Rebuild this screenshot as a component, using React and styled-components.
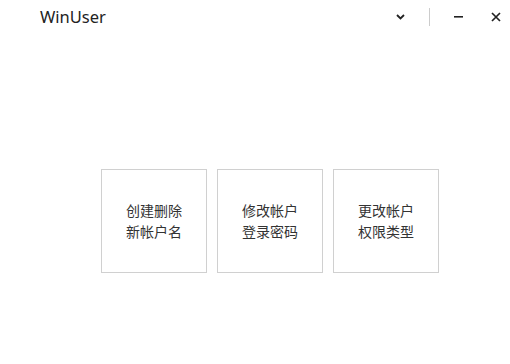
import styled, { createGlobalStyle } from "styled-components";

const GlobalStyle = createGlobalStyle`
  html, body {
    margin: 0;
    padding: 0;
    background: #fff;
    font-family: "Noto Sans", "Noto Sans CJK SC", sans-serif;
  }
`;

const Window = styled.div`
  width: 510px;
  height: 364px;
  display: flex;
  flex-direction: column;
  background: #fff;
`;

const TitleBar = styled.div`
  height: 34px;
  display: flex;
  align-items: center;
  padding: 0 4px 0 40px;
`;

const Title = styled.div`
  flex: 1;
  font-size: 16.5px;
  color: #222;
  margin-top: -1px;
`;

const Controls = styled.div`
  display: flex;
  align-items: center;
  height: 100%;
  gap: 18px;
`;

const CtrlButton = styled.div`
  width: 20px;
  height: 100%;
  display: flex;
  align-items: center;
  justify-content: center;
`;

const Divider = styled.div`
  width: 1px;
  height: 18px;
  background: #ccc;
  margin-left: 1px;
`;

const Content = styled.div`
  display: flex;
  gap: 10px;
  padding: 135px 0 0 101px;
`;

const Tile = styled.div`
  width: 104px;
  height: 102px;
  border: 1px solid #d0d0d0;
  display: flex;
  flex-direction: column;
  align-items: center;
  justify-content: center;
  font-family: "Noto Sans CJK SC", sans-serif;
  font-size: 14px;
  line-height: 21px;
  color: #333;
  cursor: pointer;
`;

const tiles = [
  ["创建删除", "新帐户名"],
  ["修改帐户", "登录密码"],
  ["更改帐户", "权限类型"],
];

export default function App() {
  return (
    <Window>
      <GlobalStyle />
      <TitleBar>
        <Title>WinUser</Title>
        <Controls>
          <CtrlButton>
            <svg width="9" height="6" viewBox="0 0 9 6">
              <path d="M1 1 L4.5 4.5 L8 1" fill="none" stroke="#222" strokeWidth="1.8" />
            </svg>
          </CtrlButton>
          <Divider />
          <CtrlButton>
            <svg width="9" height="2" viewBox="0 0 9 2">
              <rect x="0" y="0" width="9" height="1.6" fill="#222" />
            </svg>
          </CtrlButton>
          <CtrlButton>
            <svg width="10" height="10" viewBox="0 0 10 10">
              <path d="M1 1 L9 9 M9 1 L1 9" stroke="#222" strokeWidth="1.7" />
            </svg>
          </CtrlButton>
        </Controls>
      </TitleBar>
      <Content>
        {tiles.map((t) => (
          <Tile key={t[0]}>
            <span>{t[0]}</span>
            <span>{t[1]}</span>
          </Tile>
        ))}
      </Content>
    </Window>
  );
}
